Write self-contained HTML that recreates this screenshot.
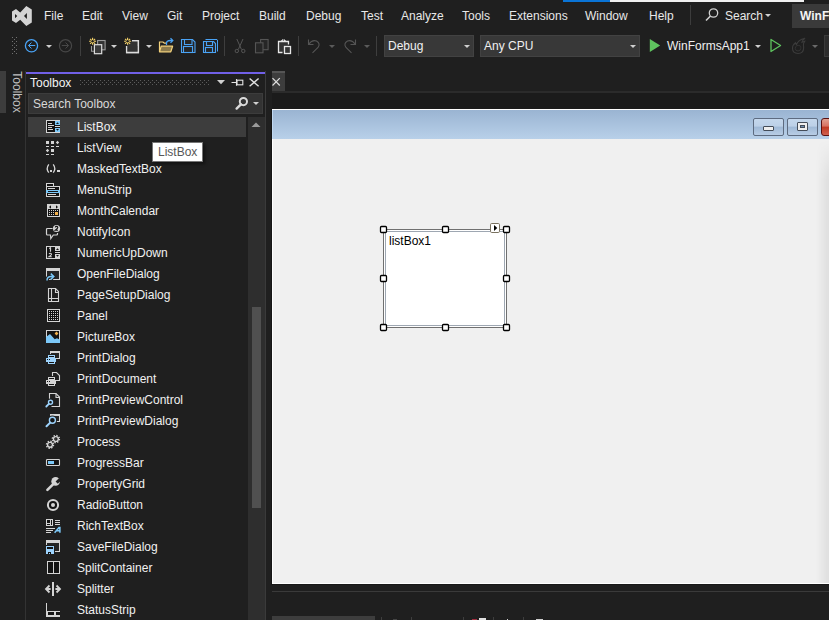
<!DOCTYPE html>
<html><head><meta charset="utf-8">
<style>
*{margin:0;padding:0;box-sizing:border-box}
html,body{width:829px;height:620px;overflow:hidden;background:#1f1f1f}
body{position:relative;font-family:"Liberation Sans",sans-serif;font-size:12px;color:#f0f0f0}
.a{position:absolute}
.t{position:absolute;white-space:nowrap;line-height:14px}
.menu .t{top:9px;color:#e8e8e8}
svg{position:absolute;overflow:visible}
.row{position:absolute;left:28px;width:218px;height:21px}
.row .t{left:49px;top:3px;color:#f1f1f1}
.row svg{left:17px;top:2px}
</style></head><body>

<!-- top progress line -->
<div class="a" style="left:563px;top:0;width:47px;height:2px;background:#0a74d6"></div>
<div class="a" style="left:610px;top:0;width:194px;height:2px;background:#f0f0f0"></div>

<!-- VS logo -->
<svg width="40" height="32" style="left:0;top:0">
<path d="M12 11.5 L16 9 L20.2 12.4 L26.3 6 L31.8 9.5 L31.8 22.6 L26.3 26 L20.2 19.8 L16 23 L12 20.5 Z M15 14 L15 18.2 L17.3 16 Z M26.9 13 L26.9 19.1 L24 16 Z" fill="#d4d4d4" fill-rule="evenodd"/>
</svg>

<!-- menu -->
<div class="menu">
<div class="t" style="left:44px">File</div>
<div class="t" style="left:82px">Edit</div>
<div class="t" style="left:122px">View</div>
<div class="t" style="left:167px">Git</div>
<div class="t" style="left:202px">Project</div>
<div class="t" style="left:259px">Build</div>
<div class="t" style="left:306px">Debug</div>
<div class="t" style="left:361px">Test</div>
<div class="t" style="left:401px">Analyze</div>
<div class="t" style="left:462px">Tools</div>
<div class="t" style="left:509px">Extensions</div>
<div class="t" style="left:585px">Window</div>
<div class="t" style="left:649px">Help</div>
<div class="t" style="left:725px">Search</div>
</div>
<div class="a" style="left:690px;top:5px;width:1px;height:20px;background:#3c3c3c"></div>
<svg width="16" height="16" style="left:704px;top:7px"><circle cx="9.5" cy="6" r="4.2" fill="none" stroke="#d0d0d0" stroke-width="1.3"/><path d="M6.5 9 L2 13.5" stroke="#d0d0d0" stroke-width="1.6"/></svg>
<svg width="8" height="6" style="left:765px;top:14px"><path d="M0 0 H6 L3 3 Z" fill="#d0d0d0"/></svg>
<div class="a" style="left:792px;top:4px;width:40px;height:24px;background:#3a3a3a"></div>
<div class="t" style="left:800px;top:9px;font-weight:bold;color:#f4f4f4">WinForms</div>

<!-- toolbar -->
<svg width="6" height="18" style="left:12px;top:37px"><g fill="#707070"><rect x="0" y="0" width="1" height="1"/><rect x="4" y="0" width="1" height="1"/><rect x="0" y="4" width="1" height="1"/><rect x="4" y="4" width="1" height="1"/><rect x="0" y="8" width="1" height="1"/><rect x="4" y="8" width="1" height="1"/><rect x="0" y="12" width="1" height="1"/><rect x="4" y="12" width="1" height="1"/><rect x="0" y="16" width="1" height="1"/><rect x="4" y="16" width="1" height="1"/><rect x="2" y="2" width="1" height="1"/><rect x="2" y="6" width="1" height="1"/><rect x="2" y="10" width="1" height="1"/><rect x="2" y="14" width="1" height="1"/></g></svg>
<svg width="16" height="16" style="left:24px;top:38px"><circle cx="7.5" cy="7.8" r="6.1" fill="none" stroke="#4aa3f5" stroke-width="1.3"/><path d="M11.2 7.5H4.5M7.5 4.5L4.5 7.5L7.5 10.5" fill="none" stroke="#4aa3f5" stroke-width="1"/></svg>
<svg width="8" height="5" style="left:46px;top:45px"><path d="M0 0H6L3 3Z" fill="#cfcfcf"/></svg>
<svg width="16" height="16" style="left:58px;top:38px"><circle cx="7.5" cy="7.8" r="6.1" fill="none" stroke="#474747" stroke-width="1.2"/><path d="M3.8 7.5H10.5M7.5 4.5L10.5 7.5L7.5 10.5" fill="none" stroke="#474747" stroke-width="1"/></svg>
<div class="a" style="left:80px;top:36px;width:1px;height:20px;background:#3e3e3e"></div>
<svg width="20" height="18" style="left:88px;top:37px"><rect x="9.6" y="3.5" width="7.5" height="9.3" fill="#333" stroke="#9a9a9a" stroke-width="1.1"/><path d="M3.5 9V14.3H6" fill="none" stroke="#9a9a9a" stroke-width="1.1"/><rect x="6.4" y="7.7" width="7.3" height="9" fill="#3a3a3a" stroke="#dcdcdc" stroke-width="1.2"/><g stroke="#f5d36a" stroke-width="1.1"><path d="M1.0999999999999996 4.3H8.1M4.6 0.7999999999999998V7.8M2.0999999999999996 1.7999999999999998L7.1 6.8M7.1 1.7999999999999998L2.0999999999999996 6.8"/></g><circle cx="4.6" cy="4.3" r="1.3" fill="#1f1f1f"/></svg>
<svg width="8" height="5" style="left:111px;top:45px"><path d="M0 0H6L3 3Z" fill="#cfcfcf"/></svg>
<svg width="20" height="18" style="left:123px;top:37px"><path d="M9 3.6H15.4V15.5H3.6V9" fill="#333" stroke="#dcdcdc" stroke-width="1.3"/><rect x="3.6" y="9" width="11" height="6" fill="#333"/><path d="M9 3.6H15.4V15.5H3.6V9" fill="none" stroke="#dcdcdc" stroke-width="1.3"/><g stroke="#f5d36a" stroke-width="1.1"><path d="M1.0999999999999996 4.3H8.1M4.6 0.7999999999999998V7.8M2.0999999999999996 1.7999999999999998L7.1 6.8M7.1 1.7999999999999998L2.0999999999999996 6.8"/></g><circle cx="4.6" cy="4.3" r="1.3" fill="#1f1f1f"/></svg>
<svg width="8" height="5" style="left:146px;top:45px"><path d="M0 0H6L3 3Z" fill="#cfcfcf"/></svg>
<svg width="17" height="17" style="left:158px;top:37px"><path d="M1.5 14.8V5H5L6.3 6.2H9" fill="none" stroke="#f3d27c" stroke-width="1.2"/><path d="M1.5 14.8L3.2 9.2H14.6L12.8 14.8Z" fill="#8c7a4c" stroke="#f3d27c" stroke-width="1.2" stroke-linejoin="round"/><path d="M8.5 8V6.5Q8.5 3.5 12.5 3.5H14" fill="none" stroke="#4aa3f5" stroke-width="1.3"/><path d="M12.5 1.2L14.8 3.5L12.5 5.8" fill="none" stroke="#4aa3f5" stroke-width="1.3"/></svg>
<svg width="16" height="16" style="left:181px;top:39px"><path d="M0.5 0.5H11.5L14 3V13.5H0.5Z" fill="#262626" stroke="#4aa3f5" stroke-width="1.1"/><path d="M3.5 0.5V5.5H11V0.5" fill="none" stroke="#4aa3f5" stroke-width="1.1"/><rect x="2.5" y="7.5" width="9" height="6" fill="#262626" stroke="#4aa3f5" stroke-width="1.1"/></svg>
<svg width="18" height="16" style="left:203px;top:39px"><path d="M2.5 0.5H14L14.5 1V12.5" fill="none" stroke="#4aa3f5" stroke-width="1"/><path d="M0.5 2.5H10.5L12.5 4.5V13.5H0.5Z" fill="#262626" stroke="#4aa3f5" stroke-width="1.1"/><path d="M3.5 2.5V6.5H9.5V2.5" fill="none" stroke="#4aa3f5" stroke-width="1.1"/><rect x="2.5" y="8.5" width="7" height="5" fill="#262626" stroke="#4aa3f5" stroke-width="1.1"/></svg>
<div class="a" style="left:224px;top:36px;width:1px;height:20px;background:#3e3e3e"></div>
<svg width="12" height="16" style="left:234px;top:38px"><g fill="none" stroke="#555" stroke-width="1"><path d="M2.8 1L7.5 11.5M9 1L4.3 11.5"/><circle cx="2.8" cy="13" r="1.7"/><circle cx="9.3" cy="13" r="1.7"/></g></svg>
<svg width="16" height="16" style="left:254px;top:38px"><rect x="6.6" y="1.5" width="7.5" height="10.2" fill="#262626" stroke="#555" stroke-width="1.1"/><rect x="1.5" y="4.8" width="7.5" height="10" fill="#262626" stroke="#555" stroke-width="1.1"/></svg>
<svg width="16" height="18" style="left:277px;top:37px"><rect x="1.5" y="4.5" width="10" height="11" fill="#333"/><path d="M5.5 15.5H1.5V4.5H11.5V7.5" fill="none" stroke="#e8e8e8" stroke-width="1.3"/><path d="M3 5L4.4 3.2H4.8A1.75 1.75 0 0 1 8.1 3.2H8.5L9.9 5Z" fill="#e8e8e8"/><circle cx="6.45" cy="2.9" r="0.7" fill="#1f1f1f"/><rect x="7.5" y="9.5" width="6" height="7" fill="#333" stroke="#e8e8e8" stroke-width="1.3"/></svg>
<div class="a" style="left:298px;top:36px;width:1px;height:20px;background:#3e3e3e"></div>
<svg width="16" height="16" style="left:306px;top:38px"><path d="M2.5 1.5V6.5H7.5" fill="none" stroke="#555" stroke-width="1.1"/><path d="M2.8 6.3Q6 1.5 10.5 3Q14.8 5.5 12 9.5L6.5 14.8" fill="none" stroke="#555" stroke-width="1.1"/></svg>
<svg width="8" height="5" style="left:329px;top:45px"><path d="M0 0H6L3 3Z" fill="#5a5a5a"/></svg>
<svg width="16" height="16" style="left:342px;top:38px"><path d="M13.5 1.5V6.5H8.5" fill="none" stroke="#555" stroke-width="1.1"/><path d="M13.2 6.3Q10 1.5 5.5 3Q1.2 5.5 4 9.5L9.5 14.8" fill="none" stroke="#555" stroke-width="1.1"/></svg>
<svg width="8" height="5" style="left:364px;top:45px"><path d="M0 0H6L3 3Z" fill="#5a5a5a"/></svg>
<div class="a" style="left:376px;top:36px;width:1px;height:20px;background:#3e3e3e"></div>
<div class="a" style="left:384px;top:35px;width:90px;height:22px;background:#383838;border:1px solid #424242"></div>
<div class="t" style="left:388px;top:39px;color:#f0f0f0">Debug</div>
<svg width="8" height="5" style="left:464px;top:45px"><path d="M0 0H6L3 3Z" fill="#cfcfcf"/></svg>
<div class="a" style="left:480px;top:35px;width:160px;height:22px;background:#383838;border:1px solid #424242"></div>
<div class="t" style="left:484px;top:39px;color:#f0f0f0">Any CPU</div>
<svg width="8" height="5" style="left:630px;top:45px"><path d="M0 0H6L3 3Z" fill="#cfcfcf"/></svg>
<svg width="14" height="17" style="left:648px;top:37px"><path d="M1.8 2L12.2 8.5L1.8 15Z" fill="#5fc45f"/></svg>
<div class="t" style="left:667px;top:39px;color:#f0f0f0">WinFormsApp1</div>
<svg width="8" height="5" style="left:755px;top:45px"><path d="M0 0H6L3 3Z" fill="#cfcfcf"/></svg>
<svg width="14" height="17" style="left:769px;top:37px"><path d="M2 2.5L11.6 8.5L2 14.5Z" fill="none" stroke="#5fc45f" stroke-width="1.3" stroke-linejoin="round"/></svg>
<svg width="18" height="18" style="left:790px;top:37px"><path d="M8 16.5Q2.5 16.5 2.5 11.3Q2.5 8 5.5 5.8Q5.8 7 6.5 7.5Q8 3 15 1.2Q12.3 3.6 12 5.2Q13.3 4.6 14.6 4.3Q13.2 6.2 13.4 8.3Q13.8 9.5 13.6 11.3Q13.4 16.5 8 16.5Z" fill="none" stroke="#3c3c3c" stroke-width="1.1"/><path d="M8 14Q5.2 14 5.2 11.3Q5.2 9.5 7 8.5Q9 8 10.6 9.2Q11 10.5 10.8 11.5Q10.5 14 8 14Z" fill="none" stroke="#333" stroke-width="1"/></svg>
<svg width="8" height="5" style="left:812px;top:45px"><path d="M0 0H6L3 3Z" fill="#6a6a6a"/></svg>
<div class="a" style="left:824px;top:35px;width:10px;height:22px;background:#2c2c2c;border:1px solid #3a3a3a"></div>

<!-- left tab strip -->
<div class="a" style="left:0;top:71px;width:6px;height:42px;background:#3d3d3d"></div>
<div class="t" style="left:-4px;top:85px;transform:rotate(90deg);transform-origin:center;color:#c0c0c0">Toolbox</div>

<!-- toolbox panel -->
<div class="a" style="left:25px;top:71px;width:241px;height:549px;background:#1f1f1f;border-left:1px solid #333;border-right:1px solid #3a3a3a"></div>
<div class="a" style="left:26px;top:72px;width:239px;height:2px;background:#7160e8"></div>
<div class="t" style="left:30px;top:76px;color:#f4f4f4">Toolbox</div>
<svg width="130" height="5" style="left:80px;top:80px"><defs><pattern id="gp" width="4" height="4" patternUnits="userSpaceOnUse"><rect x="0" y="0" width="1" height="1" fill="#5c5c5c"/><rect x="2" y="2" width="1" height="1" fill="#5c5c5c"/></pattern></defs><rect width="129" height="5" fill="url(#gp)"/></svg>
<svg width="10" height="6" style="left:217px;top:80px"><path d="M0 0 H8 L4 4.2 Z" fill="#d0d0d0"/></svg>
<svg width="14" height="9" style="left:231px;top:78px"><path d="M0.5 4.5H5.5M5.5 1V7.8" fill="none" stroke="#e4e4e4" stroke-width="1.1"/><rect x="6" y="2.2" width="5.8" height="4.6" fill="none" stroke="#e4e4e4" stroke-width="1.1"/></svg>
<svg width="12" height="10" style="left:249px;top:78px"><path d="M0.6 0.5 L9.6 8.3 M9.6 0.5 L0.6 8.3" stroke="#e0e0e0" stroke-width="1.4"/></svg>

<!-- search box -->
<div class="a" style="left:28px;top:93px;width:235px;height:21px;background:#333333;border:1px solid #3c3c3c"></div>
<div class="t" style="left:33px;top:97px;color:#d8d8d8">Search Toolbox</div>
<svg width="14" height="16" style="left:235px;top:96px"><circle cx="8.4" cy="5.6" r="3.6" fill="none" stroke="#dadada" stroke-width="2"/><path d="M5.9 8.3 L1.6 12.6" stroke="#dadada" stroke-width="2.4" stroke-linecap="round"/></svg>
<svg width="8" height="6" style="left:253px;top:102px"><path d="M0 0 H6 L3 3 Z" fill="#d0d0d0"/></svg>

<!-- scrollbar -->
<div class="a" style="left:248px;top:117px;width:17px;height:503px;background:#2e2e2e"></div>
<svg width="12" height="8" style="left:251px;top:121px"><path d="M0.5 6 L5 1.5 L9.5 6 Z" fill="#9a9a9a"/></svg>
<div class="a" style="left:252px;top:307px;width:9px;height:201px;background:#505050"></div>

<!-- list -->
<div class="row" style="top:117px;height:20px;background:#3d3d3d"></div>
<div class="row" style="top:117px"><svg width="16" height="16" viewBox="0 0 16 16" shape-rendering="auto"><rect x="1" y="1" width="14" height="13" fill="#d4d4d4"/><rect x="2" y="2" width="8" height="11" fill="#141414"/><rect x="10" y="2" width="5" height="4" fill="#7cc8f8"/><rect x="10" y="6" width="5" height="1" fill="#141414"/><rect x="10" y="7" width="5" height="1" fill="#d4d4d4"/><rect x="10" y="8" width="5" height="1" fill="#141414"/><rect x="10" y="9" width="5" height="4" fill="#7cc8f8"/><rect x="3" y="4" width="4" height="1" fill="#d4d4d4"/><rect x="3" y="6" width="6" height="1" fill="#d4d4d4"/><rect x="3" y="8" width="4" height="1" fill="#d4d4d4"/><rect x="3" y="10" width="5" height="1" fill="#d4d4d4"/><path d="M11 5H14L12.5 3.2Z M11 10H14L12.5 11.8Z" fill="#141414"/></svg><div class="t">ListBox</div></div>
<div class="row" style="top:138px"><svg width="16" height="16" viewBox="0 0 16 16" shape-rendering="auto"><rect x="1" y="1" width="3" height="3" fill="#d4d4d4"/><rect x="6" y="1" width="3" height="3" fill="#d4d4d4"/><rect x="6" y="9" width="3" height="3" fill="#d4d4d4"/><path d="M12.5 0.8L14.2 2.5L12.5 4.2L10.8 2.5ZM2.5 8.8L4.2 10.5L2.5 12.2L0.8 10.5Z" fill="#d4d4d4"/><rect x="1" y="6" width="3" height="1" fill="#d4d4d4"/><rect x="6" y="6" width="3" height="1" fill="#d4d4d4"/><rect x="11" y="6" width="3" height="1" fill="#d4d4d4"/><rect x="1" y="14" width="3" height="1" fill="#d4d4d4"/><rect x="6" y="14" width="3" height="1" fill="#d4d4d4"/></svg><div class="t">ListView</div></div>
<div class="row" style="top:159px"><svg width="16" height="16" viewBox="0 0 16 16" shape-rendering="auto"><path d="M3.8 3.3Q0.6 7.5 3.8 11.7M8.2 3.3Q11.4 7.5 8.2 11.7" fill="none" stroke="#d4d4d4" stroke-width="1.3"/><rect x="5" y="9" width="2" height="2" fill="#d4d4d4"/><rect x="12" y="9" width="3" height="2" fill="#d4d4d4"/></svg><div class="t">MaskedTextBox</div></div>
<div class="row" style="top:180px"><svg width="16" height="16" viewBox="0 0 16 16" shape-rendering="auto"><rect x="1" y="1" width="8" height="4" fill="#d4d4d4"/><rect x="2" y="2" width="6" height="2" fill="#141414"/><rect x="1" y="4" width="14" height="11" fill="#d4d4d4"/><rect x="2" y="5" width="12" height="9" fill="#141414"/><rect x="3" y="6" width="7" height="1" fill="#d4d4d4"/><rect x="1" y="8" width="14" height="3" fill="#7cc8f8"/><rect x="3" y="9" width="10" height="1" fill="#141414"/><rect x="3" y="12" width="8" height="1" fill="#d4d4d4"/></svg><div class="t">MenuStrip</div></div>
<div class="row" style="top:201px"><svg width="16" height="16" viewBox="0 0 16 16" shape-rendering="auto"><rect x="2" y="1" width="13" height="13" fill="#d4d4d4"/><rect x="3" y="6" width="11" height="7" fill="#141414"/><path d="M6 2.3L4 4L6 5.7Z M11 2.3L13 4L11 5.7Z" fill="#141414"/><rect x="4" y="7" width="1" height="1" fill="#d4d4d4"/><rect x="6" y="7" width="1" height="1" fill="#d4d4d4"/><rect x="8" y="7" width="1" height="1" fill="#d4d4d4"/><rect x="10" y="7" width="1" height="1" fill="#d4d4d4"/><rect x="12" y="7" width="1" height="1" fill="#d4d4d4"/><rect x="4" y="9" width="1" height="1" fill="#d4d4d4"/><rect x="4" y="11" width="1" height="1" fill="#d4d4d4"/><rect x="6" y="9" width="1" height="1" fill="#d4d4d4"/><rect x="6" y="11" width="1" height="1" fill="#d4d4d4"/><rect x="8" y="9" width="1" height="1" fill="#d4d4d4"/><rect x="8" y="11" width="1" height="1" fill="#d4d4d4"/><rect x="10" y="9" width="3" height="3" fill="#f2b04c"/></svg><div class="t">MonthCalendar</div></div>
<div class="row" style="top:222px"><svg width="16" height="16" viewBox="0 0 16 16" shape-rendering="auto"><path d="M7.5 4.5H2.5Q1.5 4.5 1.5 5.5V10Q1.5 11 2.5 11H5.5L5.8 14.5L8.3 11H11.5Q12.5 11 12.5 10V9" fill="#1f1f1f" stroke="#d4d4d4" stroke-width="1.2"/><circle cx="11.5" cy="4.5" r="3.6" fill="#d4d4d4"/><path d="M10.2 3.3Q10.5 2.4 11.6 2.4Q12.8 2.4 12.8 3.6Q12.8 4.5 10.3 6.3H13" fill="none" stroke="#141414" stroke-width="1.1"/></svg><div class="t">NotifyIcon</div></div>
<div class="row" style="top:243px"><svg width="16" height="16" viewBox="0 0 16 16" shape-rendering="auto"><rect x="1" y="1" width="14" height="13" fill="#d4d4d4"/><rect x="2" y="2" width="8" height="11" fill="#141414"/><rect x="10" y="6" width="5" height="1" fill="#141414"/><rect x="10" y="8" width="5" height="1" fill="#141414"/><path d="M11 5H14L12.5 3.3Z M11 10H14L12.5 11.7Z" fill="#141414"/><path d="M4.2 3.6L5.5 2.8V6.8" fill="none" stroke="#d4d4d4" stroke-width="1.2"/><path d="M4 9Q4.5 8.3 5.3 8.3Q6.5 8.3 6.5 9.3Q6.5 10.2 4 11.8H6.8" fill="none" stroke="#d4d4d4" stroke-width="1.1"/></svg><div class="t">NumericUpDown</div></div>
<div class="row" style="top:264px"><svg width="16" height="16" viewBox="0 0 16 16" shape-rendering="auto"><rect x="1" y="2" width="14" height="12" fill="#d4d4d4"/><rect x="2" y="5" width="12" height="8" fill="#262626"/><rect x="2" y="13" width="0" height="0" fill="#d4d4d4"/><path d="M2 14.5Q2 10.5 6 10.5H8.8M5.8 7.6L8.8 10.5L5.8 13.4" fill="none" stroke="#1f1f1f" stroke-width="3.4"/><path d="M2 14.5Q2 10.5 6 10.5H8.8M5.8 7.6L8.8 10.5L5.8 13.4" fill="none" stroke="#7cc8f8" stroke-width="1.5"/></svg><div class="t">OpenFileDialog</div></div>
<div class="row" style="top:285px"><svg width="16" height="16" viewBox="0 0 16 16" shape-rendering="auto"><path d="M3.5 14.5V1.5H10.5L13.5 4.5V14.5Z" fill="none" stroke="#d4d4d4" stroke-width="1.1"/><path d="M10.5 1.5V5.5H13.5M6.5 1.5V14.5M3.5 11.5H13.5" fill="none" stroke="#d4d4d4" stroke-width="1.1"/></svg><div class="t">PageSetupDialog</div></div>
<div class="row" style="top:306px"><svg width="16" height="16" viewBox="0 0 16 16" shape-rendering="auto"><rect x="2" y="1" width="13" height="13" fill="#d4d4d4"/><rect x="3" y="2" width="11" height="11" fill="#141414"/><rect x="4" y="3" width="1" height="1" fill="#d4d4d4"/><rect x="4" y="5" width="1" height="1" fill="#d4d4d4"/><rect x="4" y="7" width="1" height="1" fill="#d4d4d4"/><rect x="4" y="9" width="1" height="1" fill="#d4d4d4"/><rect x="4" y="11" width="1" height="1" fill="#d4d4d4"/><rect x="6" y="3" width="1" height="1" fill="#d4d4d4"/><rect x="6" y="5" width="1" height="1" fill="#d4d4d4"/><rect x="6" y="7" width="1" height="1" fill="#d4d4d4"/><rect x="6" y="9" width="1" height="1" fill="#d4d4d4"/><rect x="6" y="11" width="1" height="1" fill="#d4d4d4"/><rect x="8" y="3" width="1" height="1" fill="#d4d4d4"/><rect x="8" y="5" width="1" height="1" fill="#d4d4d4"/><rect x="8" y="7" width="1" height="1" fill="#d4d4d4"/><rect x="8" y="9" width="1" height="1" fill="#d4d4d4"/><rect x="8" y="11" width="1" height="1" fill="#d4d4d4"/><rect x="10" y="3" width="1" height="1" fill="#d4d4d4"/><rect x="10" y="5" width="1" height="1" fill="#d4d4d4"/><rect x="10" y="7" width="1" height="1" fill="#d4d4d4"/><rect x="10" y="9" width="1" height="1" fill="#d4d4d4"/><rect x="10" y="11" width="1" height="1" fill="#d4d4d4"/><rect x="12" y="3" width="1" height="1" fill="#d4d4d4"/><rect x="12" y="5" width="1" height="1" fill="#d4d4d4"/><rect x="12" y="7" width="1" height="1" fill="#d4d4d4"/><rect x="12" y="9" width="1" height="1" fill="#d4d4d4"/><rect x="12" y="11" width="1" height="1" fill="#d4d4d4"/></svg><div class="t">Panel</div></div>
<div class="row" style="top:327px"><svg width="16" height="16" viewBox="0 0 16 16" shape-rendering="auto"><rect x="1" y="1" width="14" height="13" fill="#d4d4d4"/><rect x="2" y="2" width="12" height="11" fill="#141414"/><path d="M1 8L5 5L9.7 10.3L12 9.2L15 10.8V14H1Z" fill="#7cc8f8"/><path d="M11.5 2.6L13.4 4.5L11.5 6.4L9.6 4.5Z" fill="#f2b04c"/></svg><div class="t">PictureBox</div></div>
<div class="row" style="top:348px"><svg width="16" height="16" viewBox="0 0 16 16" shape-rendering="auto"><rect x="5" y="1" width="10" height="8" fill="#d4d4d4"/><rect x="6" y="3" width="8" height="5" fill="#262626"/><rect x="5" y="4" width="6" height="5" fill="#1f1f1f"/><rect x="3" y="5" width="7" height="3" fill="#9dd3fc"/><rect x="4" y="6" width="5" height="1" fill="#141414"/><rect x="1" y="8" width="10" height="4" fill="#9dd3fc"/><rect x="2" y="9" width="1" height="1" fill="#141414"/><rect x="4" y="9" width="1" height="1" fill="#141414"/><rect x="3" y="12" width="7" height="2" fill="#9dd3fc"/><rect x="4" y="12" width="5" height="1" fill="#141414"/></svg><div class="t">PrintDialog</div></div>
<div class="row" style="top:369px"><svg width="16" height="16" viewBox="0 0 16 16" shape-rendering="auto"><path d="M7.5 5V1.5H11.5L14.5 4.5V9.5H11" fill="#1f1f1f" stroke="#d4d4d4" stroke-width="1.1"/><rect x="2" y="6" width="9" height="9" fill="#1f1f1f"/><rect x="3" y="6" width="7" height="3" fill="#d4d4d4"/><rect x="4" y="7" width="5" height="1" fill="#141414"/><rect x="1" y="9" width="10" height="4" fill="#d4d4d4"/><rect x="2" y="10" width="1" height="1" fill="#141414"/><rect x="4" y="10" width="1" height="1" fill="#141414"/><rect x="3" y="13" width="7" height="2" fill="#d4d4d4"/><rect x="4" y="13" width="5" height="1" fill="#141414"/></svg><div class="t">PrintDocument</div></div>
<div class="row" style="top:390px"><svg width="16" height="16" viewBox="0 0 16 16" shape-rendering="auto"><path d="M4.5 8V1.5H11L14.5 5V14.5H6.5" fill="none" stroke="#d4d4d4" stroke-width="1.1"/><path d="M11 1.5V5.5H14.5" fill="none" stroke="#d4d4d4" stroke-width="1.1"/><circle cx="5.5" cy="10.3" r="2.3" fill="#141414" stroke="#1f1f1f" stroke-width="3"/><circle cx="5.5" cy="10.3" r="2" fill="#141414" stroke="#9dd3fc" stroke-width="1.4"/><path d="M3.9 11.9L1.3 14.5" stroke="#9dd3fc" stroke-width="1.8" stroke-linecap="round"/></svg><div class="t">PrintPreviewControl</div></div>
<div class="row" style="top:411px"><svg width="16" height="16" viewBox="0 0 16 16" shape-rendering="auto"><rect x="5" y="1" width="10" height="8" fill="#d4d4d4"/><rect x="6" y="3" width="8" height="5" fill="#262626"/><circle cx="7.4" cy="7.3" r="3.1" fill="#141414" stroke="#1f1f1f" stroke-width="3.2"/><circle cx="7.4" cy="7.3" r="3" fill="#141414" stroke="#9dd3fc" stroke-width="1.4"/><path d="M5.2 9.6L1.5 13.3" stroke="#9dd3fc" stroke-width="2" stroke-linecap="round"/></svg><div class="t">PrintPreviewDialog</div></div>
<div class="row" style="top:432px"><svg width="16" height="16" viewBox="0 0 16 16" shape-rendering="auto"><circle cx="10.9" cy="5" r="3.5" fill="none" stroke="#d4d4d4" stroke-width="1.5" stroke-dasharray="1.37 1.37"/><circle cx="10.9" cy="5" r="2.4" fill="none" stroke="#d4d4d4" stroke-width="1.4"/><circle cx="10.9" cy="5" r="1.2" fill="#141414"/><rect x="10.4" y="4.5" width="1" height="1" fill="#888"/><circle cx="5" cy="10.8" r="4.3" fill="#1f1f1f"/><circle cx="5" cy="10.8" r="3.5" fill="none" stroke="#d4d4d4" stroke-width="1.5" stroke-dasharray="1.37 1.37"/><circle cx="5" cy="10.8" r="2.4" fill="none" stroke="#d4d4d4" stroke-width="1.4"/><circle cx="5" cy="10.8" r="1.2" fill="#141414"/><rect x="4.5" y="10.3" width="1" height="1" fill="#888"/></svg><div class="t">Process</div></div>
<div class="row" style="top:453px"><svg width="16" height="16" viewBox="0 0 16 16" shape-rendering="auto"><rect x="1.5" y="4.5" width="13" height="6" rx="0.8" fill="#141414" stroke="#d4d4d4" stroke-width="1.1"/><rect x="3" y="6" width="6" height="3" fill="#7cc8f8"/></svg><div class="t">ProgressBar</div></div>
<div class="row" style="top:474px"><svg width="16" height="16" viewBox="0 0 16 16" shape-rendering="auto"><circle cx="10.6" cy="5.4" r="4.3" fill="#d4d4d4"/><path d="M10.6 5.6L14.2 2L16.5 4.2L12.8 7.8Z" fill="#1f1f1f"/><path d="M8.5 7.8L2.4 13.9" stroke="#d4d4d4" stroke-width="2.6" stroke-linecap="round"/></svg><div class="t">PropertyGrid</div></div>
<div class="row" style="top:495px"><svg width="16" height="16" viewBox="0 0 16 16" shape-rendering="auto"><circle cx="8" cy="8" r="5.1" fill="#141414" stroke="#d4d4d4" stroke-width="2"/><circle cx="8" cy="8" r="2" fill="#d4d4d4"/></svg><div class="t">RadioButton</div></div>
<div class="row" style="top:516px"><svg width="16" height="16" viewBox="0 0 16 16" shape-rendering="auto"><rect x="1" y="1" width="7" height="7" fill="#d4d4d4"/><rect x="2" y="2" width="3" height="3" fill="#141414"/><rect x="2" y="6" width="3" height="1" fill="#141414"/><rect x="6" y="2" width="1" height="5" fill="#141414"/><rect x="10" y="2" width="5" height="1" fill="#d4d4d4"/><rect x="10" y="4" width="5" height="1" fill="#d4d4d4"/><rect x="10" y="6" width="5" height="1" fill="#d4d4d4"/><rect x="1" y="10" width="9" height="1" fill="#d4d4d4"/><rect x="1" y="12" width="7" height="1" fill="#d4d4d4"/><rect x="1" y="14" width="5" height="1" fill="#d4d4d4"/><path d="M9.6 14.8L14 9.6H14.9V14.8M11.6 12.7H14.6" fill="none" stroke="#7cc8f8" stroke-width="1.5"/></svg><div class="t">RichTextBox</div></div>
<div class="row" style="top:537px"><svg width="16" height="16" viewBox="0 0 16 16" shape-rendering="auto"><rect x="1" y="1" width="14" height="12" fill="#d4d4d4"/><rect x="2" y="4" width="12" height="8" fill="#262626"/><rect x="1" y="6" width="9" height="9" fill="#1f1f1f"/><rect x="1" y="7" width="8" height="8" fill="#9dd3fc"/><rect x="2" y="8" width="6" height="2" fill="#141414"/><rect x="3" y="13" width="3" height="2" fill="#141414"/><rect x="4" y="14" width="1" height="1" fill="#9dd3fc"/></svg><div class="t">SaveFileDialog</div></div>
<div class="row" style="top:558px"><svg width="16" height="16" viewBox="0 0 16 16" shape-rendering="auto"><rect x="2" y="1" width="13" height="13" fill="#d4d4d4"/><rect x="3" y="2" width="5" height="11" fill="#141414"/><rect x="9" y="2" width="5" height="11" fill="#141414"/></svg><div class="t">SplitContainer</div></div>
<div class="row" style="top:579px"><svg width="16" height="16" viewBox="0 0 16 16" shape-rendering="auto"><rect x="7" y="1" width="2" height="14" fill="#d4d4d4"/><path d="M4.5 4.5L1 8L4.5 11.5M1.2 8H5.6M11.5 4.5L15 8L11.5 11.5M14.8 8H10.4" fill="none" stroke="#d4d4d4" stroke-width="1.8"/></svg><div class="t">Splitter</div></div>
<div class="row" style="top:600px"><svg width="16" height="16" viewBox="0 0 16 16" shape-rendering="auto"><rect x="1" y="1" width="1" height="14" fill="#d4d4d4"/><rect x="1" y="9" width="14" height="6" fill="#d4d4d4"/><rect x="3" y="10" width="6" height="3" fill="#141414"/><rect x="11" y="10" width="4" height="3" fill="#141414"/></svg><div class="t">StatusStrip</div></div>

<!-- tooltip -->
<div class="a" style="left:152px;top:142px;width:51px;height:20px;background:#fff;border:1px solid #767676;box-shadow:2px 2px 3px rgba(0,0,0,0.45)"></div>
<div class="t" style="left:158px;top:145px;color:#575757">ListBox</div>

<!-- document tab -->
<div class="a" style="left:272px;top:71px;width:13px;height:20px;background:#3d3d3d;border-top:2px solid #555"></div>
<svg width="12" height="10" style="left:271px;top:77px"><path d="M1.5 1.2 L8.8 8.5 M8.8 1.2 L1.5 8.5" stroke="#e0e0e0" stroke-width="1.2"/></svg>
<div class="a" style="left:272px;top:91px;width:557px;height:2px;background:#2b2b2b"></div>
<div class="a" style="left:272px;top:93px;width:557px;height:16px;background:#1b1b1b"></div>

<!-- designer -->
<div class="a" style="left:272px;top:109px;width:557px;height:1px;background:#fff"></div>
<div class="a" style="left:272px;top:110px;width:557px;height:29px;background:linear-gradient(#9ab4d2,#b8d0e9);border-left:1px solid #c0d8f0"></div>
<div class="a" style="left:272px;top:139px;width:557px;height:445px;background:#f0f0f0;border-left:1px solid #fff"></div>
<div class="a" style="left:271px;top:109px;width:1px;height:476px;background:#161616"></div>
<div class="a" style="left:272px;top:584px;width:557px;height:1px;background:#181818"></div>
<div class="a" style="left:816px;top:140px;width:13px;height:443px;background:linear-gradient(90deg,rgba(0,0,0,0),rgba(0,0,0,0.07));-webkit-mask-image:linear-gradient(rgba(0,0,0,0),#000 40px)"></div>
<div class="a" style="left:272px;top:583px;width:557px;height:1px;background:#fff"></div>
<div class="a" style="left:272px;top:591px;width:557px;height:1px;background:#3a3a3a"></div>
<div class="a" style="left:272px;top:616px;width:103px;height:4px;background:#3d3d3d"></div>
<div class="a" style="left:381px;top:617px;width:1px;height:3px;background:#3e3e3e"></div><div class="a" style="left:411px;top:617px;width:1px;height:3px;background:#3e3e3e"></div><div class="a" style="left:463px;top:617px;width:1px;height:3px;background:#3e3e3e"></div><div class="a" style="left:493px;top:617px;width:1px;height:3px;background:#3e3e3e"></div><div class="a" style="left:523px;top:617px;width:1px;height:3px;background:#3e3e3e"></div><div class="a" style="left:393px;top:619px;width:4px;height:1px;background:#444"></div><div class="a" style="left:472px;top:619px;width:5px;height:1px;background:#a03040"></div><div class="a" style="left:479px;top:618px;width:7px;height:2px;background:#e0e0e0"></div><div class="a" style="left:507px;top:619px;width:1px;height:1px;background:#ccc"></div><div class="a" style="left:536px;top:619px;width:7px;height:1px;background:#cfcfcf"></div>

<!-- form buttons -->
<div class="a" style="left:753px;top:118px;width:31px;height:18px;border:1px solid #5d6b80;border-radius:2px;background:linear-gradient(#c4d7ec 0,#bcd0e7 45%,#9fb9d6 50%,#b8cde5 100%)"></div>
<div class="a" style="left:763px;top:126px;width:11px;height:5px;background:#eee;border:1px solid #444c58;border-radius:1px"></div>
<div class="a" style="left:787px;top:118px;width:31px;height:18px;border:1px solid #5d6b80;border-radius:2px;background:linear-gradient(#c4d7ec 0,#bcd0e7 45%,#9fb9d6 50%,#b8cde5 100%)"></div>
<div class="a" style="left:797px;top:122px;width:11px;height:9px;background:#eee;border:1px solid #444c58;border-radius:1px"></div>
<div class="a" style="left:800px;top:125px;width:5px;height:3px;background:#6f8db0;border:1px solid #444c58"></div>
<div class="a" style="left:821px;top:118px;width:12px;height:18px;border:1px solid #5a1010;border-radius:3px;background:linear-gradient(#e0a090 0,#d87060 45%,#c03820 50%,#d06050 100%)"></div>

<!-- listbox control -->
<svg width="150" height="125" style="left:370px;top:215px" shape-rendering="crispEdges"><rect x="13" y="14" width="124" height="99" fill="#fff"/><rect x="13" y="14" width="124" height="1" fill="#707070"/><rect x="13" y="112" width="124" height="1" fill="#707070"/><rect x="13" y="14" width="1" height="99" fill="#707070"/><rect x="136" y="14" width="1" height="99" fill="#707070"/><rect x="15" y="16" width="120" height="1" fill="#9ea7b2"/><rect x="15" y="110" width="120" height="1" fill="#9ea7b2"/><rect x="15" y="16" width="1" height="95" fill="#9ea7b2"/><rect x="134" y="16" width="1" height="95" fill="#9ea7b2"/></svg>
<svg width="150" height="125" style="left:370px;top:215px"><rect x="10.5" y="11.5" width="6" height="6" rx="1" fill="#fff" stroke="#000" stroke-width="1.3"/><rect x="72.5" y="11.5" width="6" height="6" rx="1" fill="#fff" stroke="#000" stroke-width="1.3"/><rect x="133.5" y="11.5" width="6" height="6" rx="1" fill="#fff" stroke="#000" stroke-width="1.3"/><rect x="10.5" y="60.5" width="6" height="6" rx="1" fill="#fff" stroke="#000" stroke-width="1.3"/><rect x="133.5" y="60.5" width="6" height="6" rx="1" fill="#fff" stroke="#000" stroke-width="1.3"/><rect x="10.5" y="109.5" width="6" height="6" rx="1" fill="#fff" stroke="#000" stroke-width="1.3"/><rect x="72.5" y="109.5" width="6" height="6" rx="1" fill="#fff" stroke="#000" stroke-width="1.3"/><rect x="133.5" y="109.5" width="6" height="6" rx="1" fill="#fff" stroke="#000" stroke-width="1.3"/><rect x="120.5" y="8.5" width="9" height="9" rx="1.2" fill="#fff" stroke="#7a7260" stroke-width="1"/><path d="M124 10L127.30000000000001 13L124 16Z" fill="#000"/></svg>
<div class="t" style="left:389px;top:234px;color:#000">listBox1</div>

</body></html>
